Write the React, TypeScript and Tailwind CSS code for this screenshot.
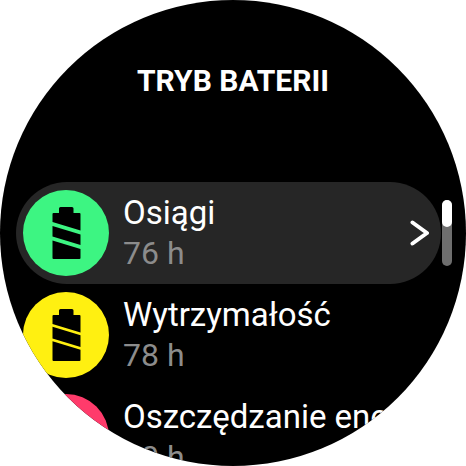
import React from 'react';

const items = [
  { name: 'Osiągi', time: '76 h', color: 'bg-[#3df582]', thin: false, active: true },
  { name: 'Wytrzymałość', time: '78 h', color: 'bg-[#fff011]', thin: true, active: false },
  { name: 'Oszczędzanie energii', time: '10 h', color: 'bg-[#ff3b6b]', thin: true, active: false },
];

const BatteryIcon: React.FC<{ thin: boolean }> = ({ thin }) => {
  // the gap between the body pieces is the coloured stripe
  const a = thin ? 2.7 : 4;
  return (
    <svg width="29" height="52" viewBox="0 0 29 52" className="block">
      <path
        d={`M7 1.5 Q7 0 8.5 0 H20 Q21.5 0 21.5 1.5 V6 H27.5 Q28.5 6 28.5 7 V23.5 L0.5 ${15} V7 Q0.5 6 1.5 6 H7 Z`}
        fill="#000"
      />
      <path d={`M0.5 ${15 + a} L28.5 ${23.5 + a} V38 L0.5 29.5 Z`} fill="#000" />
      <path d={`M0.5 ${29.5 + a} L28.5 ${38 + a} V51 Q28.5 52 27.5 52 H1.5 Q0.5 52 0.5 51 Z`} fill="#000" />
    </svg>
  );
};

const Row: React.FC<{ item: (typeof items)[number] }> = ({ item }) => (
  <div
    className={`flex h-[102px] w-[425px] shrink-0 items-center rounded-full pl-[7px] ${
      item.active ? 'bg-[#262626]' : ''
    }`}
  >
    <div className={`flex h-[86px] w-[86px] shrink-0 items-center justify-center rounded-full ${item.color}`}>
      <BatteryIcon thin={item.thin} />
    </div>
    <div className="ml-[14px] min-w-0 flex-1">
      <div className="whitespace-nowrap text-[33px] leading-[40px] text-white">{item.name}</div>
      <div className="whitespace-nowrap text-[32px] leading-[40px] text-[#8c8c8c]">{item.time}</div>
    </div>
    {item.active && (
      <svg width="20" height="26" viewBox="0 0 20 26" className="mr-[11px] shrink-0">
        <path d="M2.5 2.5 L17 13 L2.5 23.5" fill="none" stroke="#fff" strokeWidth="4" strokeLinecap="round" strokeLinejoin="round" />
      </svg>
    )}
  </div>
);

export default function App() {
  return (
    <div className="h-[466px] w-[466px] bg-white">
      <div className="relative h-[466px] w-[466px] overflow-hidden rounded-full bg-black font-['Roboto',sans-serif]">
        <div className="flex h-[182px] justify-center pt-[63px]">
          <h1 className="text-[30px] font-bold leading-[36px] text-white">TRYB BATERII</h1>
        </div>
        <div className="flex flex-col pl-[16px]">
          {items.map((item) => (
            <Row key={item.name} item={item} />
          ))}
        </div>
        <div className="absolute left-[442px] top-[200px] h-[66px] w-[10px] rounded-full bg-[#6e6e6e]">
          <div className="h-[27px] w-[10px] rounded-full bg-white" />
        </div>
      </div>
    </div>
  );
}
